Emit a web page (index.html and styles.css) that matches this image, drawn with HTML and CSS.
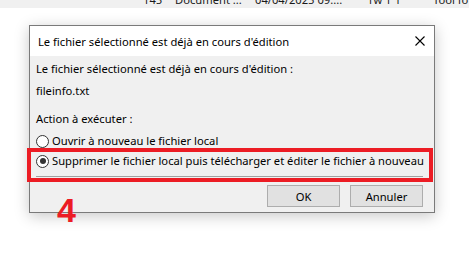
FILE: index.html
```html
<!DOCTYPE html>
<html lang="fr">
<head>
<meta charset="utf-8">
<link rel="stylesheet" href="styles.css">
</head>
<body>
<div class="topbar">
  <span class="c1">145</span>
  <span class="c2">Document ...</span>
  <span class="c3">04/04/2025 09:...</span>
  <span class="c4">1w 1 1</span>
  <span class="c5">Tool fo</span>
</div>
<div class="dialog">
  <div class="titlebar">
    <span class="title">Le fichier sélectionné est déjà en cours d'édition</span>
    <svg class="close" width="10" height="10" viewBox="0 0 10 10"><path d="M0.5 0.5 L9.5 9.5 M9.5 0.5 L0.5 9.5" stroke="#000" stroke-width="1.1" fill="none"/></svg>
  </div>
  <div class="content">
    <p class="line msg">Le fichier sélectionné est déjà en cours d'édition :</p>
    <p class="line file">fileinfo.txt</p>
    <p class="line action">Action à exécuter :</p>
    <div class="radio r1"><span class="circle"></span><span>Ouvrir à nouveau le fichier local</span></div>
    <div class="radio r2"><span class="circle checked"></span><span>Supprimer le fichier local puis télécharger et éditer le fichier à nouveau</span></div>
    <div class="sep"></div>
    <div class="buttons">
      <button class="btn">OK</button>
      <button class="btn">Annuler</button>
    </div>
  </div>
  <div class="highlight"></div>
</div>
<div class="step">4</div>
</body>
</html>
```
FILE: styles.css
```css
html, body {
  margin: 0;
  padding: 0;
  background: #ffffff;
  width: 469px;
  height: 260px;
  overflow: hidden;
  position: relative;
  font-family: "Noto Sans", "Liberation Sans", sans-serif;
  font-size: 11.2px;
  color: #000;
}
.topbar {
  height: 8px;
  background: #f0f0f0;
  overflow: hidden;
  display: grid;
  grid-template-columns: 143px 32px 80px 112px 66px 1fr;
  line-height: 12px;
  color: #1a1a1a;
}
.topbar span {
  margin-top: -6px;
}
.topbar .c1 { grid-column: 2; }
.topbar .c2 { grid-column: 3; }
.topbar .c3 { grid-column: 4; }
.topbar .c4 { grid-column: 5; }
.topbar .c5 { grid-column: 6; white-space: nowrap; }
.dialog {
  position: relative;
  margin: 17px 0 0 29px;
  width: 404px;
  height: 186px;
  border: 1px solid #7a7a7a;
  background: #f0f0f0;
  box-shadow: 0 3px 14px rgba(0,0,0,0.22);
  display: flex;
  flex-direction: column;
}
.titlebar {
  height: 30px;
  background: #ffffff;
  display: flex;
  align-items: center;
  justify-content: space-between;
  padding: 0 9px 0 8px;
}
.title { padding-top: 1px; }
.close { display: block; }
.content {
  flex: 1;
  padding: 0 0 0 6px;
  display: flex;
  flex-direction: column;
}
.line {
  margin: 0;
  line-height: 16px;
  white-space: nowrap;
}
.msg { margin-top: 5px; }
.file { margin-top: 6px; }
.action { margin-top: 12px; }
.radio {
  display: flex;
  align-items: center;
  gap: 3px;
  height: 16px;
  line-height: 16px;
  white-space: nowrap;
}
.r1 { margin-top: 6px; }
.r2 { margin-top: 4px; }
.circle {
  width: 11px;
  height: 11px;
  border: 1px solid #333;
  border-radius: 50%;
  background: #fff;
  position: relative;
  flex: none;
}
.circle.checked::after {
  content: "";
  position: absolute;
  left: 2.5px;
  top: 2.5px;
  width: 6px;
  height: 6px;
  border-radius: 50%;
  background: #333;
}
.sep {
  margin: 7px 11px 0 0;
  height: 1px;
  background: #a0a0a0;
}
.buttons {
  display: flex;
  justify-content: flex-end;
  gap: 10px;
  margin: 8px 11px 0 0;
}
.btn {
  width: 73px;
  height: 22px;
  border: 1px solid #adadad;
  background: #e1e1e1;
  font: inherit;
  color: #000;
  padding: 0;
}
.highlight {
  position: absolute;
  left: -3px;
  top: 122px;
  width: 398px;
  height: 26px;
  border: 4px solid #ec1c24;
}
.step {
  position: absolute;
  left: 57px;
  top: 190px;
  font-family: "Liberation Sans", sans-serif;
  font-weight: bold;
  font-size: 34px;
  line-height: 40px;
  color: #ec1c24;
}
```
